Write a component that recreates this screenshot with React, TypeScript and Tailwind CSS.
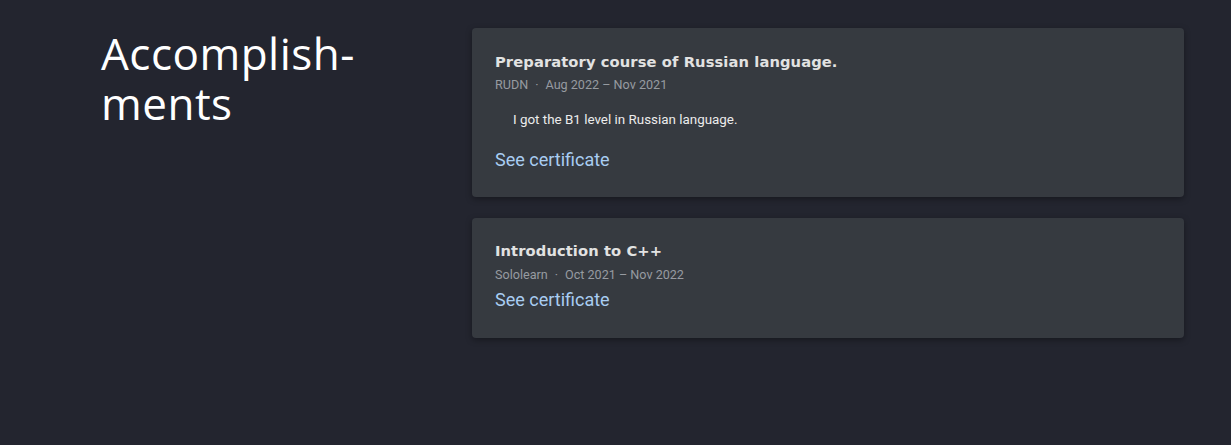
import React from "react";

const titleFont = { fontFamily: '"DejaVu Sans", "Open Sans", sans-serif' };
const headFont = { fontFamily: '"Open Sans", "DejaVu Sans", sans-serif' };
const bodyFont = { fontFamily: 'Roboto, "Liberation Sans", sans-serif' };

function Card({
  title,
  org,
  dates,
  desc,
  first,
}: {
  title: string;
  org: string;
  dates: string;
  desc?: string;
  first?: boolean;
}) {
  return (
    <div
      className={`rounded-[4px] bg-[#363a40] shadow-[0_2px_6px_rgba(0,0,0,0.35)] pl-[23px] pr-6 ${
        first ? "pt-[24px] pb-[25px]" : "pt-[23px] pb-[26px]"
      }`}
    >
      <div
        className="text-[14.7px] leading-[20px] font-bold text-[#e2e2e2] tracking-[0.1px]"
        style={titleFont}
      >
        {title}
      </div>
      <div
        className={`text-[12.6px] leading-[16px] text-[#979ba1] ${first ? "mt-[5px]" : "mt-[6px]"}`}
        style={bodyFont}
      >
        {org}
        <span className="mx-[7px]">·</span>
        {dates}
      </div>
      {desc && (
        <div
          className="mt-[19px] pl-[18px] text-[13.4px] leading-[16px] text-[#ececec]"
          style={bodyFont}
        >
          {desc}
        </div>
      )}
      <div
        className={`${desc ? "mt-[20px]" : "mt-[5px]"} text-[18px] leading-[24px] text-[#a9cdf2]`}
        style={bodyFont}
      >
        See certificate
      </div>
    </div>
  );
}

export default function App() {
  return (
    <div className="w-[1231px] h-[445px] bg-[#23252f] overflow-hidden flex">
      <div className="w-[472px] shrink-0 pl-[101px] pt-[28px]">
        <h1
          className="text-[44px] leading-[50px] font-normal text-white tracking-[0.5px]"
          style={headFont}
        >
          Accomplish-
          <br />
          ments
        </h1>
      </div>
      <div className="w-[712px] pt-[28px] flex flex-col gap-[21px]">
        <Card
          first
          title="Preparatory course of Russian language."
          org="RUDN"
          dates="Aug 2022 – Nov 2021"
          desc="I got the B1 level in Russian language."
        />
        <Card
          title="Introduction to C++"
          org="Sololearn"
          dates="Oct 2021 – Nov 2022"
        />
      </div>
    </div>
  );
}
